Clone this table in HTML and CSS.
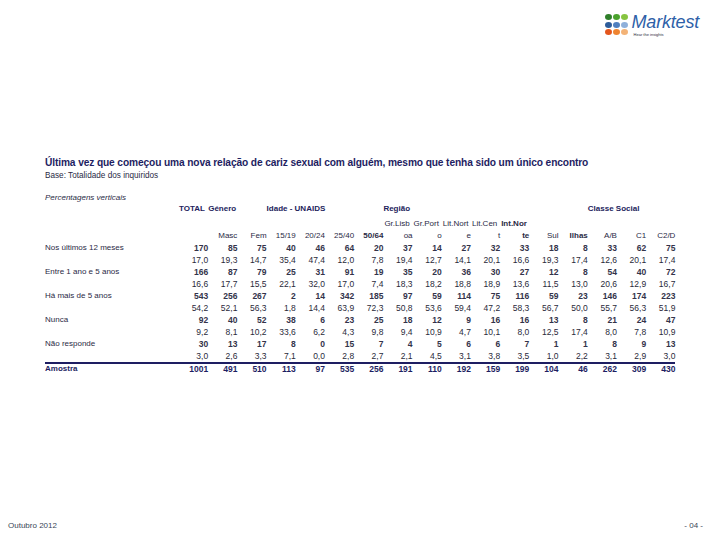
FILE: index.html
```html
<!DOCTYPE html>
<html lang="pt">
<head>
<meta charset="utf-8">
<title>Marktest - Outubro 2012</title>
<link rel="stylesheet" href="styles.css">
</head>
<body>
<div class="page">
  <header class="header">
    <div class="logo">
      <div class="dots">
        <span class="d g1"></span><span class="d g2"></span><span class="d g3"></span>
        <span class="d b1"></span><span class="d b2"></span><span class="d b3"></span>
        <span class="d o1"></span><span class="d o2"></span><span class="d o3"></span>
      </div>
      <div class="brand">
        <div class="brand-name">Marktest</div>
        <div class="brand-tag">Hear the insights</div>
      </div>
    </div>
  </header>

  <main class="main">
    <h1 class="title">Última vez que começou uma nova relação de cariz sexual com alguém, mesmo que tenha sido um único encontro</h1>
    <p class="base">Base: Totalidade dos inquiridos</p>
    <p class="note">Percentagens verticais</p>

    <table class="data">
      <colgroup>
        <col class="c-label">
        <col class="c-num"><col class="c-num"><col class="c-num"><col class="c-num"><col class="c-num"><col class="c-num"><col class="c-num"><col class="c-num"><col class="c-num"><col class="c-num"><col class="c-num"><col class="c-num"><col class="c-num"><col class="c-num"><col class="c-num"><col class="c-num"><col class="c-num">
      </colgroup>
      <thead>
        <tr class="h1">
          <th></th>
          <th class="grp g-total">TOTAL</th>
          <th class="grp g-gen" colspan="2">Género</th>
          <th class="grp g-age" colspan="4">Idade - UNAIDS</th>
          <th class="grp g-reg" colspan="7">Região</th>
          <th class="grp g-cls" colspan="3">Classe Social</th>
        </tr>
        <tr class="h2">
          <th></th>
          <th></th><th></th><th></th><th></th><th></th><th></th><th></th>
          <th class="wrap">Gr.Lisb</th>
          <th class="wrap">Gr.Port</th>
          <th class="wrap">Lit.Nort</th>
          <th class="wrap">Lit.Cen</th>
          <th class="wrap strong">Int.Nor</th>
          <th></th><th></th><th></th><th></th><th></th>
        </tr>
        <tr class="h3">
          <th></th>
          <th></th>
          <th>Masc</th><th>Fem</th>
          <th>15/19</th><th>20/24</th><th>25/40</th><th class="strong">50/64</th>
          <th>oa</th><th>o</th><th>e</th><th>t</th><th class="strong">te</th><th>Sul</th><th class="strong">Ilhas</th>
          <th>A/B</th><th>C1</th><th>C2/D</th>
        </tr>
      </thead>
      <tbody>
        <tr class="cnt"><td class="lbl">Nos últimos 12 meses</td><td>170</td><td>85</td><td>75</td><td>40</td><td>46</td><td>64</td><td>20</td><td>37</td><td>14</td><td>27</td><td>32</td><td>33</td><td>18</td><td>8</td><td>33</td><td>62</td><td>75</td></tr>
        <tr class="pct"><td class="lbl"></td><td>17,0</td><td>19,3</td><td>14,7</td><td>35,4</td><td>47,4</td><td>12,0</td><td>7,8</td><td>19,4</td><td>12,7</td><td>14,1</td><td>20,1</td><td>16,6</td><td>19,3</td><td>17,4</td><td>12,6</td><td>20,1</td><td>17,4</td></tr>
        <tr class="cnt"><td class="lbl">Entre 1 ano e 5 anos</td><td>166</td><td>87</td><td>79</td><td>25</td><td>31</td><td>91</td><td>19</td><td>35</td><td>20</td><td>36</td><td>30</td><td>27</td><td>12</td><td>8</td><td>54</td><td>40</td><td>72</td></tr>
        <tr class="pct"><td class="lbl"></td><td>16,6</td><td>17,7</td><td>15,5</td><td>22,1</td><td>32,0</td><td>17,0</td><td>7,4</td><td>18,3</td><td>18,2</td><td>18,8</td><td>18,9</td><td>13,6</td><td>11,5</td><td>13,0</td><td>20,6</td><td>12,9</td><td>16,7</td></tr>
        <tr class="cnt"><td class="lbl">Há mais de 5 anos</td><td>543</td><td>256</td><td>267</td><td>2</td><td>14</td><td>342</td><td>185</td><td>97</td><td>59</td><td>114</td><td>75</td><td>116</td><td>59</td><td>23</td><td>146</td><td>174</td><td>223</td></tr>
        <tr class="pct"><td class="lbl"></td><td>54,2</td><td>52,1</td><td>56,3</td><td>1,8</td><td>14,4</td><td>63,9</td><td>72,3</td><td>50,8</td><td>53,6</td><td>59,4</td><td>47,2</td><td>58,3</td><td>56,7</td><td>50,0</td><td>55,7</td><td>56,3</td><td>51,9</td></tr>
        <tr class="cnt"><td class="lbl">Nunca</td><td>92</td><td>40</td><td>52</td><td>38</td><td>6</td><td>23</td><td>25</td><td>18</td><td>12</td><td>9</td><td>16</td><td>16</td><td>13</td><td>8</td><td>21</td><td>24</td><td>47</td></tr>
        <tr class="pct"><td class="lbl"></td><td>9,2</td><td>8,1</td><td>10,2</td><td>33,6</td><td>6,2</td><td>4,3</td><td>9,8</td><td>9,4</td><td>10,9</td><td>4,7</td><td>10,1</td><td>8,0</td><td>12,5</td><td>17,4</td><td>8,0</td><td>7,8</td><td>10,9</td></tr>
        <tr class="cnt"><td class="lbl">Não responde</td><td>30</td><td>13</td><td>17</td><td>8</td><td>0</td><td>15</td><td>7</td><td>4</td><td>5</td><td>6</td><td>6</td><td>7</td><td>1</td><td>1</td><td>8</td><td>9</td><td>13</td></tr>
        <tr class="pct"><td class="lbl"></td><td>3,0</td><td>2,6</td><td>3,3</td><td>7,1</td><td>0,0</td><td>2,8</td><td>2,7</td><td>2,1</td><td>4,5</td><td>3,1</td><td>3,8</td><td>3,5</td><td>1,0</td><td>2,2</td><td>3,1</td><td>2,9</td><td>3,0</td></tr>
      </tbody>
      <tfoot>
        <tr class="total"><td class="lbl">Amostra</td><td>1001</td><td>491</td><td>510</td><td>113</td><td>97</td><td>535</td><td>256</td><td>191</td><td>110</td><td>192</td><td>159</td><td>199</td><td>104</td><td>46</td><td>262</td><td>309</td><td>430</td></tr>
      </tfoot>
    </table>
  </main>

  <footer class="footer">
    <span class="date">Outubro 2012</span>
    <span class="pageno">- 04 -</span>
  </footer>
</div>
</body>
</html>
```

FILE: styles.css
```css
* { box-sizing: border-box; }
html, body { margin: 0; padding: 0; background: #ffffff; }
body { font-family: "Liberation Sans", Arial, sans-serif; color: #2b2b3a; }

.page {
  width: 720px;
  height: 540px;
  display: flex;
  flex-direction: column;
}

/* Header / logo */
.header {
  display: flex;
  justify-content: flex-end;
  padding: 13px 21px 0 0;
}
.logo { display: flex; align-items: flex-start; gap: 4px; }
.dots {
  display: grid;
  grid-template-columns: repeat(3, 7px);
  grid-auto-rows: 6px;
  column-gap: 1px;
  row-gap: 1.5px;
  margin-top: 1px;
}
.d { display: block; border-radius: 50%; }
.g1 { background: #2f7f2a; }
.g2 { background: #4aa22c; }
.g3 { background: #86c440; }
.b1 { background: #2d5c9a; }
.b2 { background: #4f7fbf; }
.b3 { background: #8fb0da; }
.o1 { background: #e4561d; }
.o2 { background: #ef8430; }
.o3 { background: #f3b377; }
.brand { display: flex; flex-direction: column; }
.brand-name {
  font-style: italic;
  font-size: 18px;
  line-height: 18px;
  color: #2e5fa8;
  letter-spacing: -0.2px;
}
.brand-tag {
  font-size: 4px;
  line-height: 5px;
  color: #2a2a3a;
  margin-left: 2px;
  margin-top: 1px;
}

/* Main */
.main { padding: 0 0 0 45px; margin-top: 119px; }
.title {
  margin: 0;
  font-size: 10.2px;
  line-height: 13px;
  font-weight: bold;
  color: #1e1e62;
  letter-spacing: -0.12px;
  white-space: nowrap;
}
.base {
  margin: 1px 0 0;
  font-size: 8.2px;
  line-height: 11px;
  color: #2a2a45;
}
.note {
  margin: 12px 0 0;
  font-size: 8px;
  line-height: 10px;
  font-style: italic;
  color: #2a2a45;
}

/* Table */
.data {
  border-collapse: collapse;
  table-layout: fixed;
  width: 630.4px;
}
.c-label { width: 134px; }
.c-num { width: 29.2px; }
.data th, .data td {
  padding: 0;
  white-space: nowrap;
  overflow: visible;
}
.data th {
  font-size: 8px;
  line-height: 12px;
  height: 12px;
  font-weight: normal;
  color: #2a2a45;
  text-align: right;
}
.data .h1 th {
  height: 15px;
  vertical-align: top;
  font-weight: bold;
  text-align: left;
  color: #23235c;
}
.g-total { padding-left: 2px; }
.g-gen { padding-left: 5px; }
.g-age { padding-left: 0; }
.g-reg { padding-left: 3px; }
.g-cls { padding-left: 4px; }
.data .h2 th.wrap { text-align: left; padding-left: 1px; }
.data th.strong { font-weight: bold; }

.data td {
  font-size: 8.5px;
  line-height: 12px;
  height: 12px;
  text-align: right;
  color: #2a2a3a;
}
.data td.lbl {
  font-size: 8px;
  text-align: left;
  color: #2a2a45;
}
.data .cnt td { font-weight: bold; color: #33334a; }
.data .cnt td.lbl { font-weight: normal; color: #2a2a45; }
.data .total td {
  border-top: 2px solid #1e1e62;
  font-weight: bold;
  color: #1e1e62;
  height: 12px;
  line-height: 10px;
  vertical-align: top;
}
.data .total td.lbl { font-weight: bold; color: #1e1e62; }

/* Footer */
.footer {
  margin-top: auto;
  display: flex;
  justify-content: space-between;
  padding: 0 17px 9px 8px;
  font-size: 8px;
  line-height: 10px;
  color: #3a4658;
}
```
